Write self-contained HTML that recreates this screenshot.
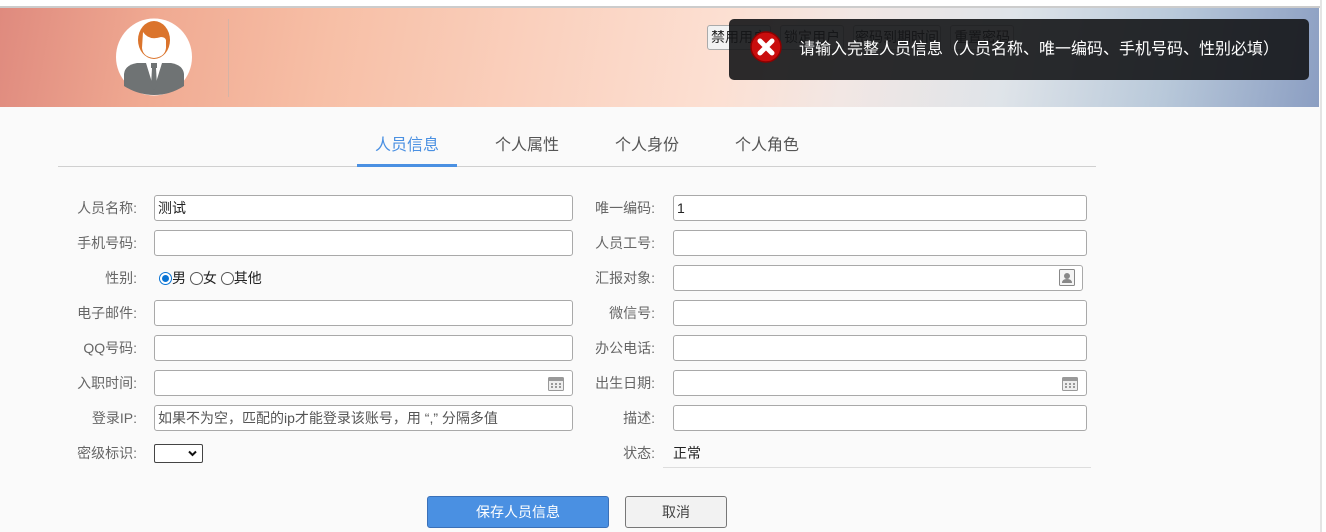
<!DOCTYPE html>
<html><head><meta charset="utf-8"><style>
*{box-sizing:border-box;margin:0;padding:0}
body{width:1326px;height:532px;overflow:hidden;background:#fafafa;font-family:"Liberation Sans","Noto Sans CJK SC",sans-serif;font-size:14px;position:relative}
.abs{position:absolute}
.top{left:0;top:0;width:1320px;height:8px;background:#fff;border-bottom:2px solid #ccc}
.rs{left:1320px;top:0;width:6px;height:532px;background:#fff;border-left:2px solid #e4e4e4}
.hdr2{left:0;top:8px;width:1319px;height:99px;background:linear-gradient(100deg,#df8a7e 0%,#f0aa92 12%,#f7bfa6 25%,#fad0bd 40%,#fce0d3 55%,#f2e7e4 64%,#dfe4e9 76%,#b9c9da 88%,#8b9ec2 100%)}
.lbl{width:90px;text-align:right;color:#666;font-size:14px;line-height:26px;white-space:nowrap}
.inp{height:26px;border:1px solid #a9a9a9;border-radius:3px;background:#fff;font-size:14px;line-height:24px;padding-left:3px;color:#222;white-space:nowrap;overflow:hidden}
.hb{height:25px;border:1px solid #aaa;border-radius:3px;background:#f2f2f2;color:#222;font-size:14px;line-height:23px;text-align:center;white-space:nowrap}
.tab{width:100px;text-align:center;font-size:16px;color:#555;top:136px;line-height:20px}
.rad{display:inline-block;width:13px;height:13px;border-radius:50%;border:1px solid #555;vertical-align:-2px;position:relative;background:#fff}
</style></head><body>
<div class="abs top"></div>
<div class="abs hdr2"></div>
<div class="abs rs"></div>
<svg class="abs" style="left:115px;top:18px" width="78" height="78" viewBox="0 0 78 78">
<ellipse cx="39" cy="39" rx="38" ry="38.5" fill="#fff"/>
<ellipse cx="39" cy="22" rx="16" ry="19" fill="#db742c"/>
<path d="M28 14 Q34 23 46 19 Q50 19 51 22 L51 30 Q50 39 39 40 Q28 39 27 30Z" fill="#fff"/>
<path d="M9 68 L9 56 Q10 47 22 45 L56 45 Q68 47 69 56 L69 68 Q55 77 39 77 Q23 77 9 68Z" fill="#6f7374"/>
<path d="M31 45 L39 71 L47 45Z" fill="#fff"/>
<rect x="36" y="45" width="6" height="5" fill="#6f7374"/>
<path d="M37 50 L41 50 L42 68 L39 72 L36 68Z" fill="#6f7374"/>
</svg>
<div class="abs" style="left:228px;top:19px;width:1px;height:78px;background:#d6b3a5"></div>
<div class="abs hb" style="left:707px;top:25px;width:64px">禁用用户</div>
<div class="abs hb" style="left:780px;top:25px;width:64px">锁定用户</div>
<div class="abs hb" style="left:853px;top:25px;width:88px">密码到期时间</div>
<div class="abs hb" style="left:950px;top:25px;width:64px">重置密码</div>
<div class="abs" style="left:729px;top:19px;width:580px;height:61px;background:rgba(20,21,23,0.9);border-radius:5px"></div>
<svg class="abs" style="left:749px;top:30px" width="34" height="34" viewBox="0 0 34 34">
<circle cx="17" cy="17" r="15" fill="#c90d0d"/><circle cx="17" cy="17" r="15" fill="none" stroke="#8c0000" stroke-width="1.5"/>
<path d="M11 11 L23 23 M23 11 L11 23" stroke="#fff" stroke-width="5" stroke-linecap="round"/>
</svg>
<div class="abs" style="left:799px;top:40px;color:#fff;font-size:16px;line-height:20px;white-space:nowrap">请输入完整人员信息（人员名称、唯一编码、手机号码、性别必填）</div>

<div class="abs" style="left:58px;top:166px;width:1038px;height:1px;background:#d0d0d0"></div>
<div class="abs tab" style="left:357px;color:#4a90e2">人员信息</div>
<div class="abs" style="left:357px;top:164px;width:100px;height:3px;background:#4a90e2"></div>
<div class="abs tab" style="left:477px">个人属性</div>
<div class="abs tab" style="left:597px">个人身份</div>
<div class="abs tab" style="left:717px">个人角色</div>

<div class="abs lbl" style="left:47px;top:195px">人员名称:</div>
<div class="abs inp" style="left:154px;top:195px;width:419px">测试</div>
<div class="abs lbl" style="left:47px;top:230px">手机号码:</div>
<div class="abs inp" style="left:154px;top:230px;width:419px"></div>
<div class="abs lbl" style="left:47px;top:265px">性别:</div>
<div class="abs" style="left:159px;top:265px;line-height:26px;color:#222;white-space:nowrap;font-size:14px">
<span class="rad" style="border-color:#0a74d4"><span style="position:absolute;left:2px;top:2px;width:7px;height:7px;border-radius:50%;background:#0a74d4"></span></span>男 <span class="rad"></span>女 <span class="rad"></span>其他</div>
<div class="abs lbl" style="left:47px;top:300px">电子邮件:</div>
<div class="abs inp" style="left:154px;top:300px;width:419px"></div>
<div class="abs lbl" style="left:47px;top:335px">QQ号码:</div>
<div class="abs inp" style="left:154px;top:335px;width:419px"></div>
<div class="abs lbl" style="left:47px;top:370px">入职时间:</div>
<div class="abs inp" style="left:154px;top:370px;width:419px"></div>
<div class="abs lbl" style="left:47px;top:405px">登录IP:</div>
<div class="abs inp" style="left:154px;top:405px;width:419px;color:#555">如果不为空，匹配的ip才能登录该账号，用 “,” 分隔多值</div>
<div class="abs lbl" style="left:47px;top:440px">密级标识:</div>
<div class="abs" style="left:154px;top:444px;width:49px;height:19px;border:1px solid #444;border-radius:2px;background:#fff">
<svg class="abs" style="left:33px;top:5px" width="9" height="7" viewBox="0 0 9 7"><path d="M1 1.5 L4.5 5 L8 1.5" fill="none" stroke="#111" stroke-width="2"/></svg></div>

<div class="abs lbl" style="left:565px;top:195px">唯一编码:</div>
<div class="abs inp" style="left:673px;top:195px;width:414px">1</div>
<div class="abs lbl" style="left:565px;top:230px">人员工号:</div>
<div class="abs inp" style="left:673px;top:230px;width:414px"></div>
<div class="abs lbl" style="left:565px;top:265px">汇报对象:</div>
<div class="abs inp" style="left:673px;top:265px;width:410px"></div>
<div class="abs lbl" style="left:565px;top:300px">微信号:</div>
<div class="abs inp" style="left:673px;top:300px;width:414px"></div>
<div class="abs lbl" style="left:565px;top:335px">办公电话:</div>
<div class="abs inp" style="left:673px;top:335px;width:414px"></div>
<div class="abs lbl" style="left:565px;top:370px">出生日期:</div>
<div class="abs inp" style="left:673px;top:370px;width:414px"></div>
<div class="abs lbl" style="left:565px;top:405px">描述:</div>
<div class="abs inp" style="left:673px;top:405px;width:414px"></div>
<div class="abs lbl" style="left:565px;top:440px">状态:</div>
<div class="abs" style="left:673px;top:440px;line-height:26px;color:#222;font-size:14px">正常</div>
<div class="abs" style="left:663px;top:467px;width:428px;height:1px;background:#ddd"></div>

<svg class="abs" style="left:1059px;top:269px" width="16" height="17" viewBox="0 0 16 17"><rect x="0.5" y="0.5" width="15" height="16" rx="1" fill="#f4f4f4" stroke="#888"/><circle cx="8" cy="7" r="3" fill="#888"/><path d="M3 14 Q3 10 8 10 Q13 10 13 14Z" fill="#888"/></svg>
<svg class="abs" style="left:548px;top:375px" width="16" height="16" viewBox="0 0 16 16"><rect x="0.5" y="2.5" width="15" height="13" rx="1" fill="#eee" stroke="#999"/><rect x="1" y="3" width="14" height="3" fill="#999"/><g fill="#999"><rect x="3" y="8" width="2" height="2"/><rect x="7" y="8" width="2" height="2"/><rect x="11" y="8" width="2" height="2"/><rect x="3" y="11" width="2" height="2"/><rect x="7" y="11" width="2" height="2"/><rect x="11" y="11" width="2" height="2"/></g></svg>
<svg class="abs" style="left:1062px;top:375px" width="16" height="16" viewBox="0 0 16 16"><rect x="0.5" y="2.5" width="15" height="13" rx="1" fill="#eee" stroke="#999"/><rect x="1" y="3" width="14" height="3" fill="#999"/><g fill="#999"><rect x="3" y="8" width="2" height="2"/><rect x="7" y="8" width="2" height="2"/><rect x="11" y="8" width="2" height="2"/><rect x="3" y="11" width="2" height="2"/><rect x="7" y="11" width="2" height="2"/><rect x="11" y="11" width="2" height="2"/></g></svg>

<div class="abs" style="left:427px;top:496px;width:182px;height:32px;background:#4a90e2;border:1px solid #3a70b8;border-radius:3px;color:#fff;text-align:center;line-height:30px;font-size:14px">保存人员信息</div>
<div class="abs" style="left:625px;top:496px;width:102px;height:32px;background:#f2f2f2;border:1px solid #777;border-radius:3px;color:#444;text-align:center;line-height:30px;font-size:14px">取消</div>
</body></html>
